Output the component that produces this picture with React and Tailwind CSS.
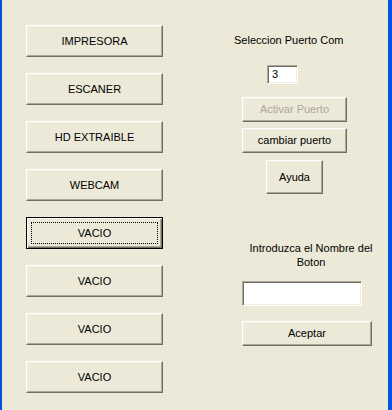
import React from "react";

const raised =
  "border border-t-white border-l-white border-b-[#716f64] border-r-[#716f64] shadow-[inset_-1px_-1px_0_#aca899,inset_1px_1px_0_#f1efe2] bg-[#ece9d8]";
const sunken =
  "border border-t-[#aca899] border-l-[#aca899] border-b-white border-r-white shadow-[inset_1px_1px_0_#716f64,inset_-1px_-1px_0_#f1efe2] bg-white";

function Btn({ children, className = "", disabled = false, focused = false }) {
  if (focused) {
    return (
      <div
        className={`relative flex items-center justify-center border border-black bg-[#ece9d8] shadow-[inset_1px_1px_0_#ffffff,inset_-1px_-1px_0_#716f64,inset_-2px_-2px_0_#aca899] ${className}`}
      >
        <div className="absolute inset-[4px] border border-dotted border-black" />
        <span>{children}</span>
      </div>
    );
  }
  return (
    <div
      className={`flex items-center justify-center ${raised} ${
        disabled ? "text-[#aca899]" : "text-black"
      } ${className}`}
    >
      {children}
    </div>
  );
}

export default function App() {
  const left = [
    "IMPRESORA",
    "ESCANER",
    "HD EXTRAIBLE",
    "WEBCAM",
    "VACIO",
    "VACIO",
    "VACIO",
    "VACIO",
  ];
  return (
    <div
      className="w-[392px] h-[410px] bg-[#ece9d8] border-l-[2px] border-r-[4px] border-[#0054e3] flex text-[11px] leading-[13px] text-black"
      style={{ fontFamily: '"Liberation Sans", Arial, sans-serif' }}
    >
      <div className="w-[161px] shrink-0 pl-[24px] pt-[25px] flex flex-col gap-[16px]">
        {left.map((t, i) => (
          <Btn key={i} focused={i === 4} className="w-[137px] h-[32px]">
            {t}
          </Btn>
        ))}
      </div>
      <div className="flex flex-col items-start">
        <div className="mt-[34px] ml-[71px] whitespace-nowrap">Seleccion Puerto Com</div>
        <div className={`mt-[18px] ml-[104px] w-[31px] h-[19px] ${sunken} flex items-center pl-[4px]`}>
          3
        </div>
        <Btn disabled className="mt-[13px] ml-[79px] w-[105px] h-[25px]">
          Activar Puerto
        </Btn>
        <Btn className="mt-[6px] ml-[79px] w-[105px] h-[25px]">cambiar puerto</Btn>
        <Btn className="mt-[7px] ml-[103px] w-[57px] h-[34px]">Ayuda</Btn>
        <div className="mt-[47px] ml-[79px] w-[138px] text-center leading-[14px]">
          Introduzca el Nombre del
          <br />
          Boton
        </div>
        <div className={`mt-[12px] ml-[79px] w-[120px] h-[25px] ${sunken}`} />
        <Btn className="mt-[15px] ml-[79px] w-[130px] h-[25px]">Aceptar</Btn>
      </div>
    </div>
  );
}
